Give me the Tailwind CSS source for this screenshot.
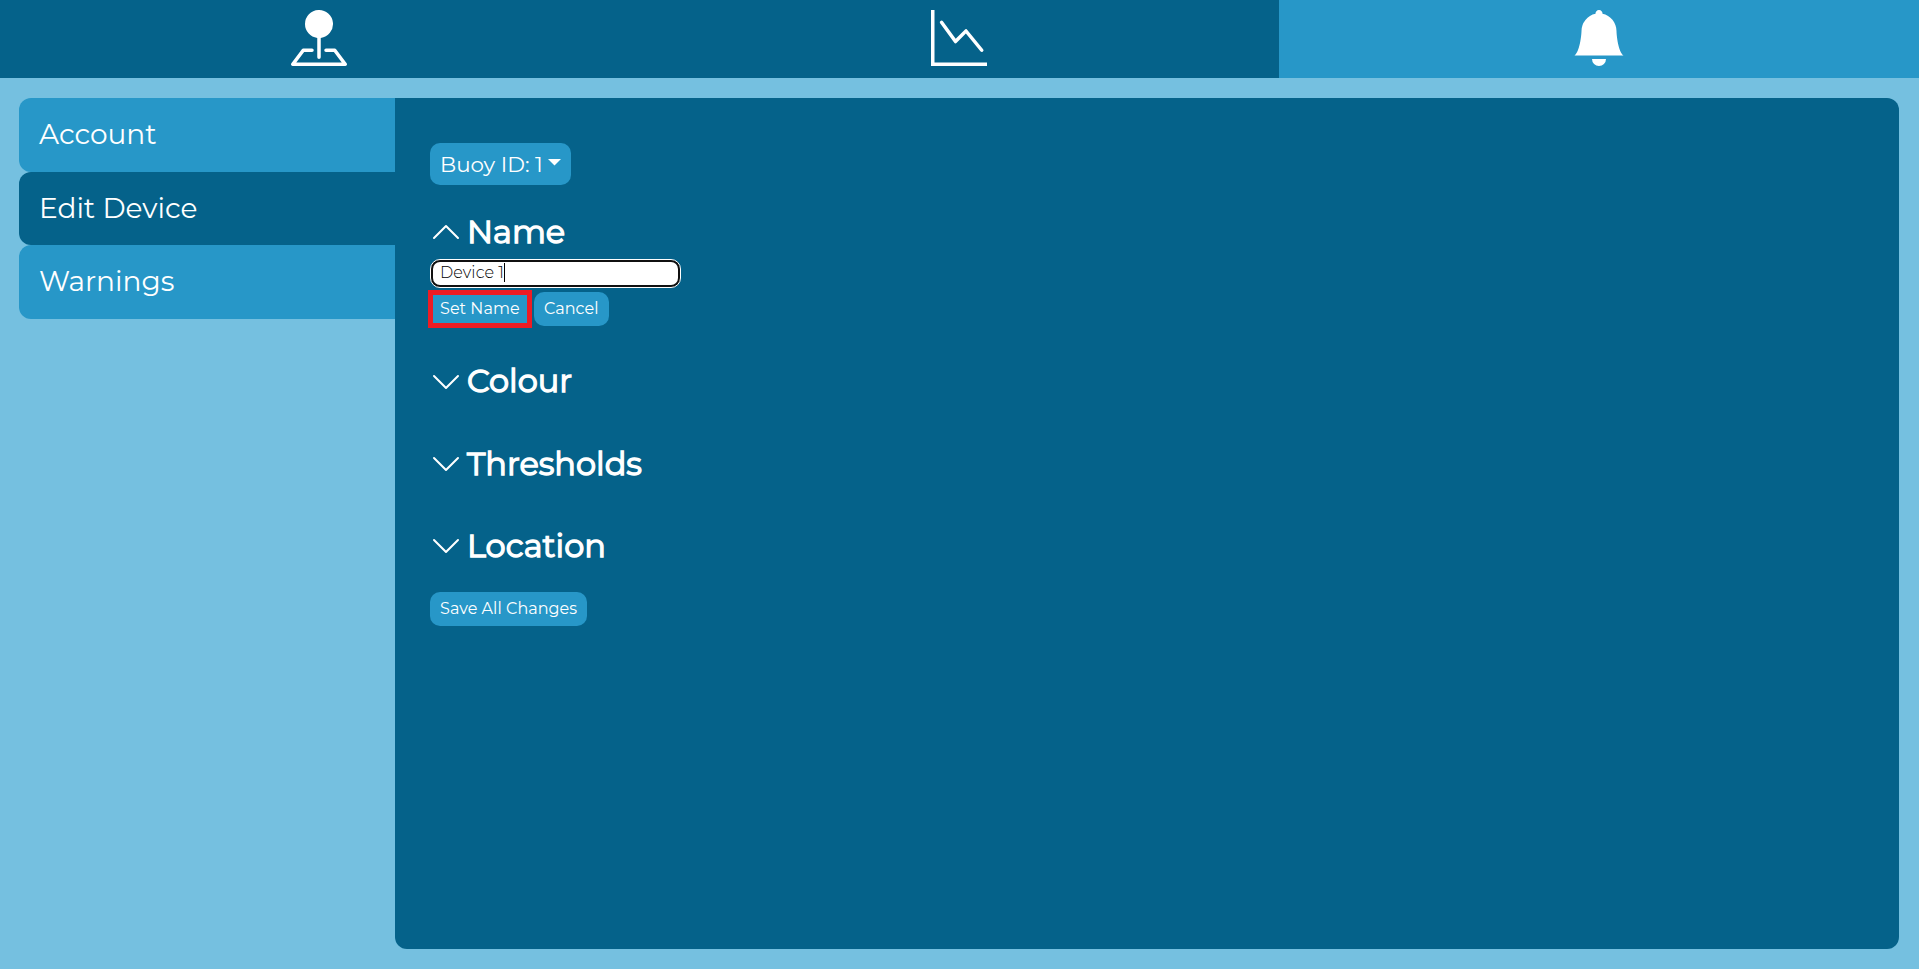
<!DOCTYPE html>
<html lang="en">
<head>
<meta charset="utf-8">
<title>Edit Device</title>
<script src="https://cdn.jsdelivr.net/npm/@tailwindcss/browser@4"></script>
</head>
<body class="h-screen overflow-hidden flex flex-col bg-[#75c0e0] text-white font-['Montserrat','Inter',sans-serif]">
<nav class="h-[78px] shrink-0 grid grid-cols-3 bg-[#05628a]">
  <a class="flex justify-center pt-[10px] pr-[2px]"><svg class="size-14" viewBox="0 0 16 16" fill="currentColor"><path d="M3.1 11.2a.5.5 0 0 1 .4-.2H6a.5.5 0 0 1 0 1H3.75L1.5 15h13l-2.25-3H10a.5.5 0 0 1 0-1h2.5a.5.5 0 0 1 .4.2l3 4a.5.5 0 0 1-.4.8H.5a.5.5 0 0 1-.4-.8l3-4z"/><path d="M4 4a4 4 0 1 1 4.5 3.969V13.5a.5.5 0 0 1-1 0V7.97A4 4 0 0 1 4 3.999z"/></svg></a>
  <a class="flex justify-center pt-[10px]"><svg class="size-14" viewBox="0 0 16 16" fill="currentColor"><path d="M0 0h1v15h15v1H0V0Zm14.817 11.887a.5.5 0 0 0 .07-.704l-4.5-5.5a.5.5 0 0 0-.74-.037L7.06 8.233 3.404 3.206a.5.5 0 0 0-.808.588l4 5.5a.5.5 0 0 0 .758.06l2.609-2.61 4.15 5.073a.5.5 0 0 0 .704.07Z"/></svg></a>
  <a class="flex justify-center pt-[10px] bg-[#2797c8]"><svg class="size-14" viewBox="0 0 16 16" fill="currentColor"><path d="M8 16a2 2 0 0 0 2-2H6a2 2 0 0 0 2 2zm.995-14.901a1 1 0 1 0-1.99 0A5.002 5.002 0 0 0 3 6c0 1.098-.5 6-2 7h14c-1.5-1-2-5.902-2-7 0-2.42-1.72-4.44-4.005-4.901z"/></svg></a>
</nav>
<main class="flex-1 flex pl-[19px] pr-5 py-5">
  <aside class="w-[376px] shrink-0 flex flex-col text-[28px] leading-[73px]">
    <a class="h-[74px] pl-5 rounded-l-xl bg-[#2797c8]">Account</a>
    <a class="h-[73px] pl-5 rounded-l-xl bg-[#05628a]">Edit Device</a>
    <a class="h-[74px] pl-5 rounded-l-xl bg-[#2797c8]">Warnings</a>
  </aside>
  <section class="flex-1 rounded-xl rounded-tl-none bg-[#05628a] pl-[35px] pt-[45px] flex flex-col items-start text-[16px]">
    <button class="h-[42px] w-[141px] pl-[10px] rounded-[10px] bg-[#2797c8] flex items-center text-[21.4px] whitespace-nowrap"><span class="w-[108px] text-left">Buoy ID: 1</span><svg class="w-[13px] h-[7px] -mt-[4px]" viewBox="0 0 13 7" fill="currentColor"><path d="M0 0h13L6.5 6.5z"/></svg></button>
    <h2 class="mt-[27px] h-[40px] flex gap-[5px] text-[32px] leading-[40px] [-webkit-text-stroke:1.3px_white]"><svg class="size-8 mt-[4px]" viewBox="0 0 16 16" fill="currentColor"><path fill-rule="evenodd" d="M7.646 4.646a.5.5 0 0 1 .708 0l6 6a.5.5 0 0 1-.708.708L8 5.707l-5.646 5.647a.5.5 0 0 1-.708-.708l6-6z"/></svg><span>Name</span></h2>
    <div class="mt-[7px] w-[251px] h-[29px] rounded-[10px] border border-white bg-[#101010] p-[2px]"><div class="h-full rounded-[7px] bg-white text-black pl-[7px] flex items-center leading-[20px] pb-[2px]"><span class="font-light tracking-[0.1px]">Device 1</span><i class="w-px h-[19px] bg-black"></i></div></div>
    <div class="mt-[2px] -ml-[2px] flex gap-[2px]">
      <button class="w-[104px] h-[38px] border-5 border-[#ed1c24] bg-[#2797c8] pl-[7px] text-left whitespace-nowrap tracking-[0.04px]">Set Name</button>
      <button class="mt-[2px] w-[75px] h-[34px] rounded-[10px] bg-[#2797c8] pl-[10px] text-left whitespace-nowrap tracking-[0.04px]">Cancel</button>
    </div>
    <h2 class="mt-[33px] h-[40px] flex gap-[5px] text-[32px] leading-[40px] [-webkit-text-stroke:1.3px_white]"><svg class="size-8 mt-[5px]" viewBox="0 0 16 16" fill="currentColor"><path fill-rule="evenodd" d="M1.646 4.646a.5.5 0 0 1 .708 0L8 10.293l5.646-5.647a.5.5 0 0 1 .708.708l-6 6a.5.5 0 0 1-.708 0l-6-6a.5.5 0 0 1 0-.708z"/></svg><span>Colour</span></h2>
    <h2 class="mt-[43px] h-[40px] flex gap-[5px] text-[32px] leading-[40px] [-webkit-text-stroke:1.3px_white]"><svg class="size-8 mt-[4px]" viewBox="0 0 16 16" fill="currentColor"><path fill-rule="evenodd" d="M1.646 4.646a.5.5 0 0 1 .708 0L8 10.293l5.646-5.647a.5.5 0 0 1 .708.708l-6 6a.5.5 0 0 1-.708 0l-6-6a.5.5 0 0 1 0-.708z"/></svg><span>Thresholds</span></h2>
    <h2 class="mt-[42px] h-[40px] flex gap-[5px] text-[32px] leading-[40px] [-webkit-text-stroke:1.3px_white]"><svg class="size-8 mt-[4px]" viewBox="0 0 16 16" fill="currentColor"><path fill-rule="evenodd" d="M1.646 4.646a.5.5 0 0 1 .708 0L8 10.293l5.646-5.647a.5.5 0 0 1 .708.708l-6 6a.5.5 0 0 1-.708 0l-6-6a.5.5 0 0 1 0-.708z"/></svg><span>Location</span></h2>
    <button class="mt-[26px] w-[157px] h-[34px] rounded-[10px] bg-[#2797c8] pl-[10px] text-left whitespace-nowrap tracking-[0.04px]">Save All Changes</button>
  </section>
</main>
</body>
</html>
